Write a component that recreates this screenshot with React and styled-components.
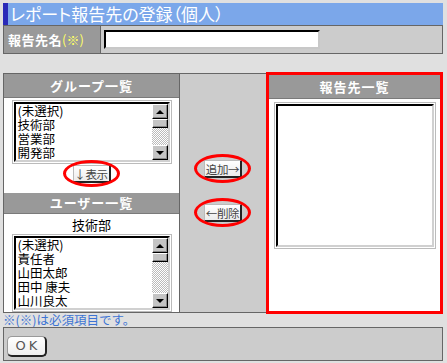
import styled, { createGlobalStyle } from "styled-components";

const GlobalStyle = createGlobalStyle`
  html, body {
    margin: 0;
    padding: 0;
    background: #e0e0e0;
    font-family: "Noto Sans CJK JP", "Noto Sans", sans-serif;
  }
  * { box-sizing: border-box; }
`

const Page = styled.div`
  width: 447px;
  height: 363px;
  padding: 3px 4px 0 3px;
  display: flex;
  flex-direction: column;
`

const Title = styled.div`
  height: 22px;
  background: #7ba7ea;
  border-left: 5px solid #2a2ab8;
  color: #fff;
  font-size: 17px;
  line-height: 22px;
  padding-left: 2px;
  font-feature-settings: "palt";
  white-space: nowrap;
`

const FormRow = styled.div`
  height: 29px;
  display: flex;
  border: 1px solid #666;
`

const Label = styled.div`
  width: 97px;
  background: #999;
  border-right: 1px solid #666;
  color: #fff;
  font-weight: bold;
  font-size: 13px;
  line-height: 27px;
  padding-left: 4px;
  letter-spacing: 0.5px;
  white-space: nowrap;
`

const Required = styled.span`
  color: #ffff66;
  font-weight: normal;
  letter-spacing: 0;
`

const InputCell = styled.div`
  flex: 1;
  background: #ccc;
  padding: 4px 3px;
`

const TextInput = styled.input`
  display: block;
  width: 216px;
  height: 19px;
  margin: 0;
  border: 2px solid;
  border-color: #000 #c8c8c8 #c8c8c8 #000;
  background: #fff;
`

const Panel = styled.div`
  margin-top: 18px;
  height: 241px;
  display: grid;
  grid-template-columns: 177px 86px 177px;
`

const LeftCol = styled.div`
  margin: 1px 0;
  border: 1px solid #666;
  background: #fff;
  display: flex;
  flex-direction: column;
  align-items: center;
`

const MiddleCol = styled.div`
  margin: 1px 0;
  border-top: 1px solid #666;
  border-bottom: 1px solid #666;
  background: #ccc;
  display: flex;
  flex-direction: column;
  align-items: center;
  padding-top: 86px;
  gap: 26px;
`

const RightCol = styled.div`
  border: 3px solid #f00;
  background: #fff;
  display: flex;
  flex-direction: column;
  align-items: center;
`

const Header = styled.div`
  align-self: stretch;
  height: ${p => p.$h}px;
  margin-top: ${p => p.$mt || 0}px;
  background: #999;
  border-bottom: 1px solid #7a7a7a;
  color: #fff;
  font-weight: bold;
  font-size: 13px;
  line-height: ${p => p.$h - 1}px;
  text-align: center;
  letter-spacing: 1px;
`

const SubLabel = styled.div`
  font-size: 13px;
  line-height: 16px;
  margin-top: 3px;
  color: #000;
`

const ListOuter = styled.div`
  width: ${p => p.$w}px;
  height: ${p => p.$h}px;
  margin-top: ${p => p.$mt}px;
  border: 1px solid #bbb;
  padding: 1px;
  background: #fff;
`

const ListInner = styled.div`
  height: 100%;
  border: 2px solid;
  border-color: #000 #d0d0d0 #d0d0d0 #000;
  display: flex;
  background: #fff;
`

const Items = styled.div`
  flex: 1;
  padding: 0 2px;
  font-size: 12.5px;
  line-height: 14px;
  color: #000;
  white-space: nowrap;
`

const Scrollbar = styled.div`
  width: 16px;
  display: flex;
  flex-direction: column;
`

const ScrollButton = styled.div`
  height: 15px;
  background: #c4c4c4;
  border: 1px solid;
  border-color: #fff #000 #000 #fff;
  box-shadow: inset -1px -1px 0 #888;
  display: flex;
  align-items: center;
  justify-content: center;
`

const Arrow = styled.div`
  width: 0;
  height: 0;
  border-left: 4px solid transparent;
  border-right: 4px solid transparent;
  ${p => p.$down ? "border-top: 4px solid #000;" : "border-bottom: 4px solid #000;"}
`

const Thumb = styled.div`
  height: 9px;
  background: #c4c4c4;
  border: 1px solid;
  border-color: #fff #000 #000 #fff;
  box-shadow: inset -1px -1px 0 #888;
`

const Track = styled.div`
  flex: 1;
  background-color: #fff;
  background-image: conic-gradient(#bbb 25%, #fff 0 50%, #bbb 0 75%, #fff 0);
  background-size: 2px 2px;
`

const ButtonWrap = styled.div`
  position: relative;
  display: inline-flex;
  margin-top: ${p => p.$mt || 0}px;
`

const Ellipse = styled.div`
  position: absolute;
  left: -10px;
  right: -9px;
  top: ${p => p.$t}px;
  bottom: ${p => p.$b}px;
  border: 3px solid #f00;
  border-radius: 50%;
  pointer-events: none;
`

const SmallButton = styled.button`
  width: 38px;
  height: 18px;
  margin: 0;
  padding: 0;
  font-family: inherit;
  font-size: 11.5px;
  letter-spacing: -0.3px;
  line-height: 14px;
  color: #444;
  background: linear-gradient(#fff, #ececec);
  border: 1px solid;
  border-color: #bbb #222 #222 #bbb;
  border-width: 1px 2px 2px 1px;
  white-space: nowrap;
`

const Note = styled.div`
  height: 14px;
  font-size: 12.5px;
  line-height: 14px;
  color: #3d74d4;
  white-space: nowrap;
`

const Footer = styled.div`
  height: 34px;
  border: 1px solid #666;
  background: #ccc;
  padding: 3px;
`

const OkButton = styled.button`
  width: 40px;
  height: 21px;
  margin: 0;
  padding: 0;
  font-family: "DejaVu Sans", sans-serif;
  font-size: 13px;
  letter-spacing: 3px;
  text-indent: 3px;
  color: #555;
  background: linear-gradient(#fff, #eee);
  border: 1px solid;
  border-width: 1px 2px 2px 1px;
  border-color: #999 #222 #222 #999;
  border-radius: 5px;
`

function ListBox({ w, h, mt, items, scroll }) {
  return (
    <ListOuter $w={w} $h={h} $mt={mt}>
      <ListInner>
        <Items>
          {items.map(t => <div key={t}>{t}</div>)}
        </Items>
        {scroll && (
          <Scrollbar>
            <ScrollButton><Arrow /></ScrollButton>
            <Thumb />
            <Track />
            <ScrollButton><Arrow $down /></ScrollButton>
          </Scrollbar>
        )}
      </ListInner>
    </ListOuter>
  )
}

function Marked({ children, mt, t = -6, b = -5 }) {
  return (
    <ButtonWrap $mt={mt}>
      <SmallButton>{children}</SmallButton>
      <Ellipse $t={t} $b={b} />
    </ButtonWrap>
  )
}

export default function App() {
  return (
    <>
      <GlobalStyle />
      <Page>
        <Title>レポート報告先の登録（個人）</Title>
        <FormRow>
          <Label>報告先名<Required>(※)</Required></Label>
          <InputCell>
            <TextInput type="text" />
          </InputCell>
        </FormRow>
        <Panel>
          <LeftCol>
            <Header $h={24}>グループ一覧</Header>
            <ListBox w={160} h={64} mt={2} scroll
              items={["(未選択)", "技術部", "営業部", "開発部"]} />
            <Marked mt={1} t={-5} b={-4}>↓表示</Marked>
            <Header $h={21} $mt={10}>ユーザー一覧</Header>
            <SubLabel>技術部</SubLabel>
            <ListBox w={160} h={78} mt={1} scroll
              items={["(未選択)", "責任者", "山田太郎", "田中 康夫", "山川良太"]} />
          </LeftCol>
          <MiddleCol>
            <Marked>追加→</Marked>
            <Marked>←削除</Marked>
          </MiddleCol>
          <RightCol>
            <Header $h={24}>報告先一覧</Header>
            <ListBox w={162} h={147} mt={3} items={[]} />
          </RightCol>
        </Panel>
        <Note>※(※)は必須項目です。</Note>
        <Footer>
          <OkButton>OK</OkButton>
        </Footer>
      </Page>
    </>
  );
}
